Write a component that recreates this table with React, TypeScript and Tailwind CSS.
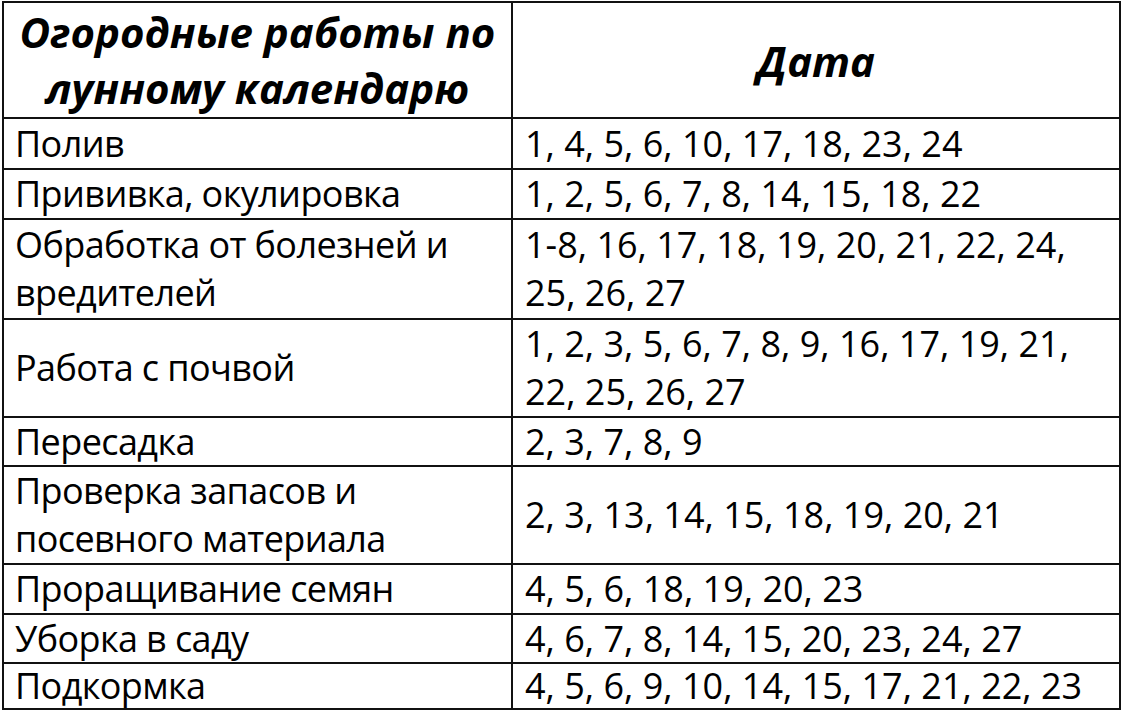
const rows: { work: string[]; dates: string[]; h: string }[] = [
  { work: ['Полив'], dates: ['1, 4, 5, 6, 10, 17, 18, 23, 24'], h: 'h-[51px]' },
  { work: ['Прививка, окулировка'], dates: ['1, 2, 5, 6, 7, 8, 14, 15, 18, 22'], h: 'h-[50px]' },
  {
    work: ['Обработка от болезней и', 'вредителей'],
    dates: ['1-8, 16, 17, 18, 19, 20, 21, 22, 24,', '25, 26, 27'],
    h: 'h-[100px]',
  },
  {
    work: ['Работа с почвой'],
    dates: ['1, 2, 3, 5, 6, 7, 8, 9, 16, 17, 19, 21,', '22, 25, 26, 27'],
    h: 'h-[98px]',
  },
  { work: ['Пересадка'], dates: ['2, 3, 7, 8, 9'], h: 'h-[49px]' },
  {
    work: ['Проверка запасов и', 'посевного материала'],
    dates: ['2, 3, 13, 14, 15, 18, 19, 20, 21'],
    h: 'h-[98px]',
  },
  { work: ['Проращивание семян'], dates: ['4, 5, 6, 18, 19, 20, 23'], h: 'h-[50px]' },
  { work: ['Уборка в саду'], dates: ['4, 6, 7, 8, 14, 15, 20, 23, 24, 27'], h: 'h-[49px]' },
  { work: ['Подкормка'], dates: ['4, 5, 6, 9, 10, 14, 15, 17, 21, 22, 23'], h: 'h-[46px]' },
];

function Lines({ lines }: { lines: string[] }) {
  return (
    <div className={lines.length > 1 ? 'leading-[48px]' : 'leading-[40px]'}>
      {lines.map((l) => (
        <div key={l} className="whitespace-nowrap">
          {l}
        </div>
      ))}
    </div>
  );
}

export default function App() {
  return (
    <div className="h-[716px] w-[1123px] overflow-hidden bg-white pl-[2px] pt-[1px] font-['Open_Sans',sans-serif] text-black">
      <table className="table-fixed border-collapse">
        <colgroup>
          <col className="w-[509px]" />
          <col className="w-[608px]" />
        </colgroup>
        <thead>
          <tr className="h-[116px]">
            <th className="border-2 border-[#111] px-1 text-center align-middle text-[42px] leading-[56px] font-bold italic">
              <div className="whitespace-nowrap">Огородные работы по</div>
              <div className="whitespace-nowrap">лунному календарю</div>
            </th>
            <th className="border-2 border-[#111] text-center align-middle text-[42px] font-bold italic">
              Дата
            </th>
          </tr>
        </thead>
        <tbody>
          {rows.map((r) => (
            <tr key={r.work[0]} className={r.h}>
              <td className="border-2 border-[#111] p-0 pl-[11px] align-middle text-[36px] tracking-[-0.6px]">
                <Lines lines={r.work} />
              </td>
              <td className="border-2 border-[#111] p-0 pl-[12px] align-middle text-[36px] tracking-[0px]">
                <Lines lines={r.dates} />
              </td>
            </tr>
          ))}
        </tbody>
      </table>
    </div>
  );
}
